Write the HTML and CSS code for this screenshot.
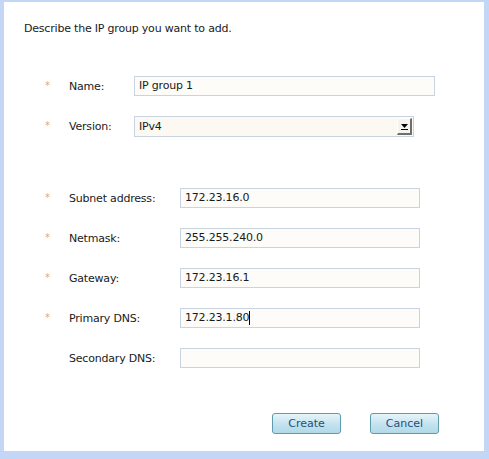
FILE: index.html
```html
<!DOCTYPE html>
<html>
<head>
<meta charset="utf-8">
<link rel="stylesheet" href="styles.css">
</head>
<body>
<div class="frame">
  <div class="panel">
    <p class="intro">Describe the IP group you want to add.</p>
    <div class="group group-top">
      <div class="row">
        <span class="req">*</span>
        <span class="label">Name:</span>
        <div class="field field-name">IP group 1</div>
      </div>
      <div class="row">
        <span class="req">*</span>
        <span class="label">Version:</span>
        <div class="select">
          <span class="select-text">IPv4</span>
          <span class="select-btn">
            <svg width="7" height="6" viewBox="0 0 7 6"><path d="M0 0H7L3.5 4Z" fill="#000"/><rect x="0" y="5" width="7" height="1" fill="#000"/></svg>
          </span>
        </div>
      </div>
    </div>
    <div class="group group-net">
      <div class="row">
        <span class="req">*</span>
        <span class="label">Subnet address:</span>
        <div class="field">172.23.16.0</div>
      </div>
      <div class="row">
        <span class="req">*</span>
        <span class="label">Netmask:</span>
        <div class="field">255.255.240.0</div>
      </div>
      <div class="row">
        <span class="req">*</span>
        <span class="label">Gateway:</span>
        <div class="field">172.23.16.1</div>
      </div>
      <div class="row">
        <span class="req">*</span>
        <span class="label">Primary DNS:</span>
        <div class="field">172.23.1.80<span class="caret"></span></div>
      </div>
      <div class="row">
        <span class="req"></span>
        <span class="label">Secondary DNS:</span>
        <div class="field"></div>
      </div>
    </div>
    <div class="actions">
      <button class="btn">Create</button>
      <button class="btn">Cancel</button>
    </div>
  </div>
</div>
</body>
</html>
```
FILE: styles.css
```css
html, body {
  margin: 0;
  padding: 0;
}
body {
  width: 489px;
  height: 459px;
  overflow: hidden;
  font-family: "DejaVu Sans", sans-serif;
  font-size: 11px;
  letter-spacing: -0.2px;
  color: #1a1a1a;
}
.frame {
  background: #c4d6f6;
  padding: 2px 5px 8px 4px;
  height: 459px;
  box-sizing: border-box;
}
.panel {
  background: #ffffff;
  height: 100%;
  box-sizing: border-box;
  padding-top: 20px;
}
.intro {
  margin: 0 0 0 20px;
  line-height: 14px;
  height: 14px;
}
.group {
  display: flex;
  flex-direction: column;
  gap: 20px;
}
.group-top {
  margin-top: 40px;
}
.group-net {
  margin-top: 52px;
}
.row {
  display: flex;
  align-items: center;
  height: 20px;
}
.req {
  width: 24px;
  margin-left: 41px;
  color: #e6a868;
  font-size: 10px;
  line-height: 10px;
  height: 10px;
  align-self: center;
  position: relative;
  top: 0;
}
.label {
  color: #1a1a1a;
}
.group-top .label {
  width: 65px;
}
.group-net .label {
  width: 111px;
}
.field {
  box-sizing: border-box;
  height: 20px;
  width: 240px;
  border: 1px solid #c9d4e2;
  background: #fdfcf9;
  padding: 0 4px;
  line-height: 18px;
  color: #1a1a1a;
  display: flex;
  align-items: center;
}
.field-name {
  width: 301px;
}
.caret {
  display: inline-block;
  width: 1px;
  height: 14px;
  background: #000;
  margin-left: 0;
}
.select {
  box-sizing: border-box;
  height: 21px;
  width: 280px;
  border: 1px solid #c9d4e2;
  background: #fbf9f1;
  display: flex;
  align-items: center;
  justify-content: space-between;
  padding: 0 1px 0 4px;
}
.select-btn {
  box-sizing: border-box;
  width: 15px;
  height: 17px;
  background: #f4f3ee;
  border-right: 2px solid #6e6e6e;
  border-bottom: 2px solid #6e6e6e;
  border-top: 1px solid #ffffff;
  border-left: 1px solid #ffffff;
  display: flex;
  align-items: center;
  justify-content: center;
  padding-top: 2px;
}
.actions {
  display: flex;
  gap: 29px;
  margin-top: 45px;
  margin-left: 268px;
}
.btn {
  box-sizing: border-box;
  width: 69px;
  height: 21px;
  border: 1px solid #5e9cab;
  border-radius: 3px;
  background: linear-gradient(#e6f4fa, #c0e1ee 60%, #b2d9e8);
  color: #1e4f7a;
  font-family: "DejaVu Sans", sans-serif;
  font-size: 11px;
  letter-spacing: 0;
  padding: 0;
}
```
